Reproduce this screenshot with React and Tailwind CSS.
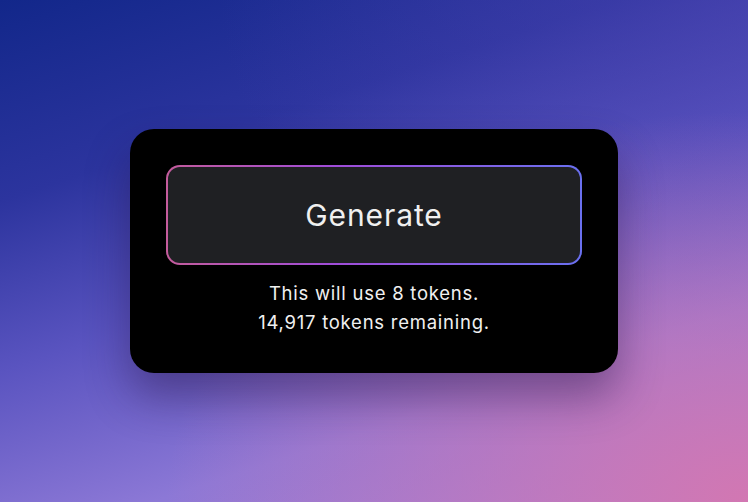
export default function App() {
  return (
    <div
      className="flex h-[502px] w-full items-center justify-center bg-[radial-gradient(ellipse_at_100%_100%,#d277b2_0%,rgba(208,119,180,0)_55%),radial-gradient(ellipse_at_100%_0%,rgba(80,70,180,0.5)_0%,rgba(80,70,180,0)_50%),linear-gradient(162deg,#12278a_0%,#2c349e_27%,#5a54c0_50%,#8c78d6_74%,#a080d8_100%)]"
      style={{ fontFamily: "Inter, 'Noto Sans', sans-serif" }}
    >
      <div className="flex w-[488px] flex-col items-center rounded-[24px] bg-black p-9 shadow-[0_24px_44px_rgba(40,20,70,0.45)]">
        <div className="w-full rounded-[14px] bg-[linear-gradient(90deg,#c45c9c,#a04cd8_40%,#6a70f0)] p-[2px]">
          <button className="flex h-[96px] w-full items-center justify-center rounded-[12px] bg-[#1f2023] text-[30px] font-normal tracking-[0.9px] text-[#f0f0f0]">
            Generate
          </button>
        </div>
        <div className="mt-[14px] text-center text-[18.5px] leading-[29px] tracking-[0.75px] text-[#f0f0f0]">
          <p>This will use 8 tokens.</p>
          <p>14,917 tokens remaining.</p>
        </div>
      </div>
    </div>
  );
}
